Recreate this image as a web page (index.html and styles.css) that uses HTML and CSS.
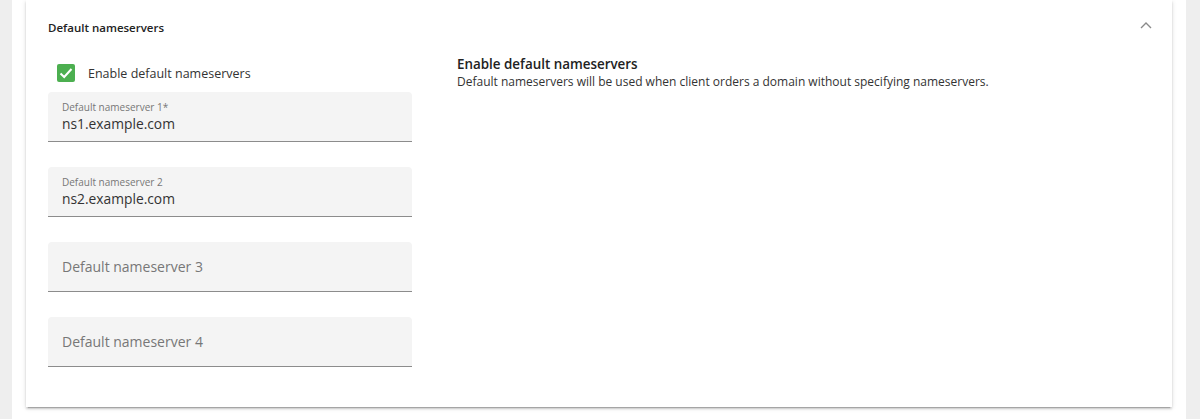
FILE: index.html
```html
<!DOCTYPE html>
<html lang="en">
<head>
    <meta charset="UTF-8">
    <title>Default nameservers</title>
    <link rel="stylesheet" href="styles.css">
</head>
<body>
    <div class="page">
        <div class="outer">
            <div class="panel">
                <div class="panel-header">
                    <span class="panel-title">Default nameservers</span>
                    <svg class="chevron" width="12" height="8" viewBox="0 0 12 8">
                        <polyline points="1,7 6,2 11,7" fill="none" stroke="#8a8a8a" stroke-width="1.4"/>
                    </svg>
                </div>
                <div class="panel-body">
                    <div class="form-col">
                        <label class="check-row">
                            <span class="checkbox">
                                <svg width="18" height="18" viewBox="0 0 18 18">
                                    <polyline points="3.5,9.5 7.2,13 14.5,5" fill="none" stroke="#fff" stroke-width="2"/>
                                </svg>
                            </span>
                            <span class="check-label">Enable default nameservers</span>
                        </label>

                        <div class="field">
                            <span class="field-label">Default nameserver 1*</span>
                            <span class="field-value">ns1.example.com</span>
                        </div>
                        <div class="field">
                            <span class="field-label">Default nameserver 2</span>
                            <span class="field-value">ns2.example.com</span>
                        </div>
                        <div class="field empty">
                            <span class="field-placeholder">Default nameserver 3</span>
                        </div>
                        <div class="field empty">
                            <span class="field-placeholder">Default nameserver 4</span>
                        </div>
                    </div>
                    <div class="help-col">
                        <div class="help-title">Enable default nameservers</div>
                        <div class="help-text">Default nameservers will be used when client orders a domain without specifying nameservers.</div>
                    </div>
                </div>
            </div>
        </div>
    </div>
</body>
</html>
```

FILE: styles.css
```css
body {
    margin: 0;
    background: #eeeeee;
    font-family: "Open Sans", Arial, sans-serif;
    color: #333333;
}

.page {
    padding: 0 14px 0 12px;
    height: 419px;
}

.outer {
    background: #ffffff;
    height: 100%;
    padding: 0 14px;
}

.panel {
    background: #ffffff;
    box-shadow: 0 3px 1px -2px rgba(0, 0, 0, 0.2), 0 2px 2px 0 rgba(0, 0, 0, 0.14), 0 1px 5px 0 rgba(0, 0, 0, 0.12);
}

.panel-header {
    height: 54px;
    display: flex;
    align-items: center;
    justify-content: space-between;
    padding: 0 20px 0 22px;
}

.panel-title {
    font-size: 11.5px;
    font-weight: 600;
    color: #222222;
}

.chevron {
    margin-top: -4px;
}

.panel-body {
    display: flex;
    gap: 45px;
    padding: 4px 22px 40px;
}

.form-col {
    width: 364px;
    display: flex;
    flex-direction: column;
}

.check-row {
    display: flex;
    align-items: center;
    height: 30px;
    padding-left: 9px;
    margin-bottom: 4px;
}

.checkbox {
    width: 18px;
    height: 18px;
    background: #4caf50;
    border-radius: 2px;
    display: flex;
}

.check-label {
    font-size: 12.5px;
    margin-left: 13px;
    color: #333333;
}

.field {
    height: 49px;
    background: #f4f4f4;
    border-radius: 4px 4px 0 0;
    border-bottom: 1px solid #8c8c8c;
    display: flex;
    flex-direction: column;
    justify-content: center;
    padding: 0 14px;
    margin-bottom: 25px;
}

.field:last-child {
    margin-bottom: 0;
}

.field-label {
    font-size: 10px;
    color: #777777;
    line-height: 14px;
}

.field-value {
    font-size: 13.8px;
    color: #333333;
    line-height: 20px;
}

.field-placeholder {
    font-size: 14px;
    color: #777777;
}

.help-title {
    font-size: 13.4px;
    font-weight: 600;
    color: #222222;
    line-height: 12px;
    margin-bottom: 3px;
}

.help-text {
    font-size: 12px;
    color: #333333;
    line-height: 18px;
}
```
